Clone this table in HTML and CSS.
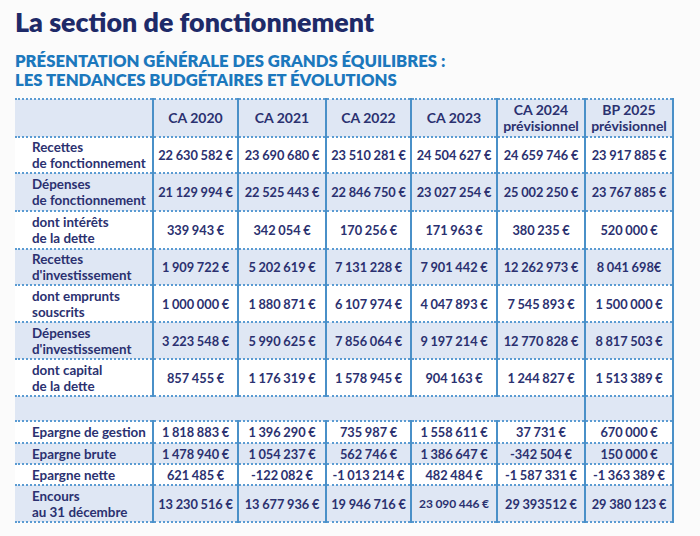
FILE: index.html
```html
<!DOCTYPE html>
<html lang="fr">
<head>
<meta charset="utf-8">
<link rel="stylesheet" href="styles.css">
</head>
<body>
<div class="page">
  <h1 class="title">La section de fonctionnement</h1>
  <h2 class="subtitle">PRÉSENTATION GÉNÉRALE DES GRANDS ÉQUILIBRES&nbsp;:<br>LES TENDANCES BUDGÉTAIRES ET ÉVOLUTIONS</h2>
  <table class="grid">
    <colgroup>
      <col class="c-label"><col class="c-a"><col class="c-b"><col class="c-a"><col class="c-d"><col class="c-b"><col class="c-b">
    </colgroup>
    <tr class="head shade h38">
      <th class="label"></th>
      <th>CA 2020</th><th>CA 2021</th><th>CA 2022</th><th>CA 2023</th>
      <th>CA 2024<br>prévisionnel</th><th>BP 2025<br>prévisionnel</th>
    </tr>
    <tr class="h36">
      <td class="label">Recettes<br>de fonctionnement</td>
      <td>22 630 582 €</td><td>23 690 680 €</td><td>23 510 281 €</td><td>24 504 627 €</td><td>24 659 746 €</td><td>23 917 885 €</td>
    </tr>
    <tr class="shade h38">
      <td class="label">Dépenses<br>de fonctionnement</td>
      <td>21 129 994 €</td><td>22 525 443 €</td><td>22 846 750 €</td><td>23 027 254 €</td><td>25 002 250 €</td><td>23 767 885 €</td>
    </tr>
    <tr class="h38">
      <td class="label">dont intérêts<br>de la dette</td>
      <td>339 943 €</td><td>342 054 €</td><td>170 256 €</td><td>171 963 €</td><td>380 235 €</td><td>520 000 €</td>
    </tr>
    <tr class="shade h36">
      <td class="label">Recettes<br>d'investissement</td>
      <td>1 909 722 €</td><td>5 202 619 €</td><td>7 131 228 €</td><td>7 901 442 €</td><td>12 262 973 €</td><td>8 041 698€</td>
    </tr>
    <tr class="h37">
      <td class="label">dont emprunts<br>souscrits</td>
      <td>1 000 000 €</td><td>1 880 871 €</td><td>6 107 974 €</td><td>4 047 893 €</td><td>7 545 893 €</td><td>1 500 000 €</td>
    </tr>
    <tr class="shade h37">
      <td class="label">Dépenses<br>d'investissement</td>
      <td>3 223 548 €</td><td>5 990 625 €</td><td>7 856 064 €</td><td>9 197 214 €</td><td>12 770 828 €</td><td>8 817 503 €</td>
    </tr>
    <tr class="h37">
      <td class="label">dont capital<br>de la dette</td>
      <td>857 455 €</td><td>1 176 319 €</td><td>1 578 945 €</td><td>904 163 €</td><td>1 244 827 €</td><td>1 513 389 €</td>
    </tr>
    <tr class="shade spacer">
      <td class="label open" colspan="6"></td>
      <td></td>
    </tr>
    <tr class="h22">
      <td class="label">Epargne de gestion</td>
      <td>1 818 883 €</td><td>1 396 290 €</td><td>735 987 €</td><td>1 558 611 €</td><td>37 731 €</td><td>670 000 €</td>
    </tr>
    <tr class="shade h21">
      <td class="label">Epargne brute</td>
      <td>1 478 940 €</td><td>1 054 237 €</td><td>562 746 €</td><td>1 386 647 €</td><td>-342 504 €</td><td>150 000 €</td>
    </tr>
    <tr class="h21">
      <td class="label">Epargne nette</td>
      <td>621 485 €</td><td>-122 082 €</td><td>-1 013 214 €</td><td>482 484 €</td><td>-1 587 331 €</td><td>-1 363 389 €</td>
    </tr>
    <tr class="shade h37">
      <td class="label">Encours<br>au 31 décembre</td>
      <td>13 230 516 €</td><td>13 677 936 €</td><td>19 946 716 €</td><td class="small">23 090 446 €</td><td>29 393512 €</td><td>29 380 123 €</td>
    </tr>
  </table>
</div>
</body>
</html>
```

FILE: styles.css
```css
html, body {
  margin: 0;
  padding: 0;
  background: #fbfbfb;
}

.page {
  padding: 7px 0 0 15px;
  font-family: Lato, "Open Sans", sans-serif;
}

.title {
  margin: 0;
  font-size: 26.8px;
  line-height: 30px;
  font-weight: 800;
  color: #1e2a68;
}

.subtitle {
  margin: 15px 0 0 0;
  font-size: 16.7px;
  line-height: 19px;
  font-weight: 800;
  color: #1c78bd;
}

.grid {
  margin-top: 8px;
  width: 659px;
  border-collapse: collapse;
  table-layout: fixed;
  color: #2b3170;
  background: #ffffff;
}

.c-label { width: 138px; }
.c-a { width: 85px; }
.c-b { width: 88px; }
.c-d { width: 86px; }

.grid th,
.grid td {
  padding: 0;
  text-align: center;
  vertical-align: middle;
  white-space: nowrap;
  border-top: 2px dotted #5a9bd2;
  border-bottom: 2px dotted #5a9bd2;
  border-left: 2px solid #4a90c8;
  border-right: 2px solid #4a90c8;
  font-size: 12.8px;
  font-weight: 700;
  line-height: 16px;
  word-spacing: -0.5px;
}

.grid th {
  font-size: 14px;
  word-spacing: 0;
}

.grid .label {
  text-align: left;
  padding-left: 17px;
  border-left: none;
  font-size: 13.4px;
  line-height: 16px;
  word-spacing: 0;
}

.grid .small {
  font-size: 12px;
}

.shade th,
.shade td {
  background: #dfe7f4;
}

.h38 > * { height: 36px; }
.h37 > * { height: 35px; }
.h36 > * { height: 34px; }
.h22 > * { height: 20px; }
.h21 > * { height: 19px; }
.spacer > * { height: 23px; }
```
